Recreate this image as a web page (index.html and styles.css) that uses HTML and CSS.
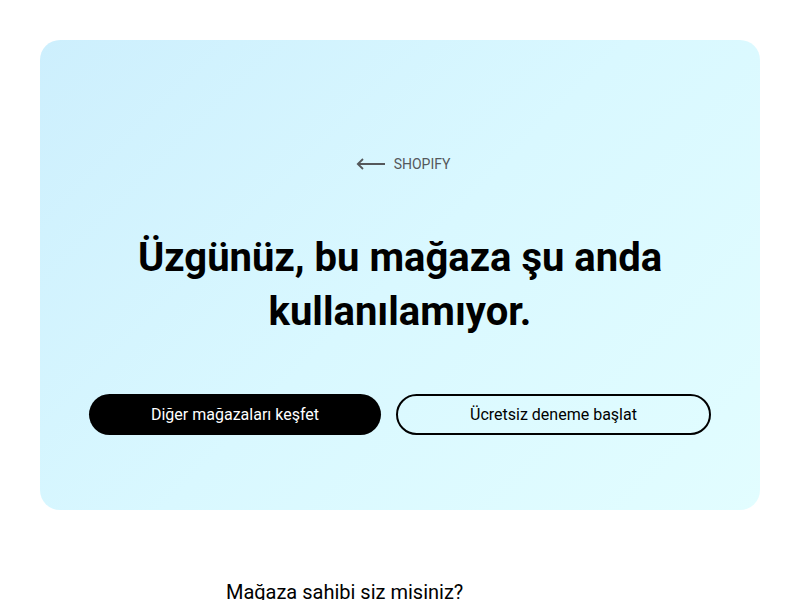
FILE: index.html
```html
<!DOCTYPE html>
<html lang="tr">
<head>
    <meta charset="UTF-8">
    <meta name="viewport" content="width=device-width, initial-scale=1.0">
    <title>Mağaza kullanılamıyor</title>
    <link rel="stylesheet" href="styles.css">
</head>
<body>
    <main class="card">
        <a class="back" href="#">
            <svg class="back-arrow" width="29" height="12" viewBox="0 0 29 12" fill="none" stroke="currentColor" stroke-width="1.8">
                <path d="M29 6H1.8M7 1L1.8 6 7 11"/>
            </svg>
            SHOPIFY
        </a>
        <h1>Üzgünüz, bu mağaza şu anda kullanılamıyor.</h1>
        <div class="actions">
            <a class="btn btn-dark" href="#">Diğer mağazaları keşfet</a>
            <a class="btn btn-outline" href="#">Ücretsiz deneme başlat</a>
        </div>
    </main>
    <section class="owner">
        <h2>Mağaza sahibi siz misiniz?</h2>
    </section>
</body>
</html>
```
FILE: styles.css
```css
body {
    font-family: Roboto, "Liberation Sans", sans-serif;
    background-color: #fff;
    margin: 0;
    color: #000;
}
.card {
    margin: 40px;
    padding: 114px 40px 75px;
    border-radius: 20px;
    background: linear-gradient(135deg, #cdeffd 0%, #d9f8ff 50%, #e2fdff 100%);
    display: flex;
    flex-direction: column;
    align-items: center;
}
.back {
    display: flex;
    align-items: center;
    gap: 9px;
    font-size: 14px;
    line-height: 20px;
    color: #55585b;
    text-decoration: none;
    margin-left: 6px;
}
.back-arrow {
    display: block;
}
h1 {
    margin: 57px 0 0;
    max-width: 560px;
    font-size: 40px;
    line-height: 54px;
    font-weight: 700;
    text-align: center;
}
.actions {
    display: flex;
    gap: 15px;
    margin-top: 55px;
}
.btn {
    display: flex;
    align-items: center;
    justify-content: center;
    height: 41px;
    box-sizing: border-box;
    border-radius: 21px;
    font-size: 16px;
    text-decoration: none;
}
.btn-dark {
    width: 292px;
    background-color: #000;
    color: #fff;
}
.btn-outline {
    width: 315px;
    border: 2px solid #000;
    color: #000;
}
.owner {
    width: 348px;
    margin: 68px auto 0;
}
.owner h2 {
    margin: 0;
    font-size: 20px;
    line-height: 28px;
    font-weight: 400;
}
```
